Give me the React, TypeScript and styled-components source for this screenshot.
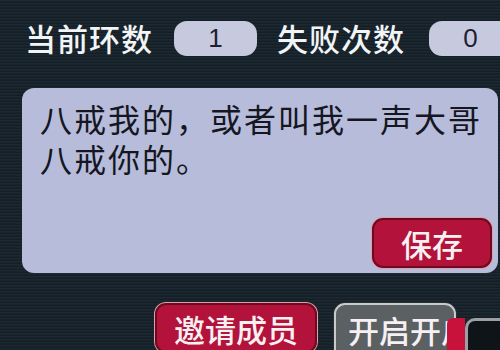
import React from "react";
import styled, { createGlobalStyle } from "styled-components";

const GlobalStyle = createGlobalStyle`
  html, body {
    margin: 0;
    padding: 0;
  }
  body {
    width: 500px;
    height: 350px;
    overflow: hidden;
    font-family: "Noto Sans CJK SC", "Noto Sans", sans-serif;
  }
`;

const Screen = styled.div`
  position: relative;
  width: 500px;
  height: 350px;
  overflow: hidden;
  background-color: #15212a;
  background-image: repeating-linear-gradient(
    to bottom,
    rgba(255, 255, 255, 0.035) 0px,
    rgba(255, 255, 255, 0.035) 1px,
    rgba(0, 0, 0, 0.08) 2px,
    rgba(0, 0, 0, 0.08) 3px
  );
  display: flex;
  flex-direction: column;
  padding: 19px 0 0 22px;
  box-sizing: border-box;
`;

const StatRow = styled.div`
  display: flex;
  align-items: center;
  height: 38px;
  flex-shrink: 0;
`;

const StatLabel = styled.span`
  color: #f2f4f6;
  font-size: 31px;
  font-weight: 500;
  letter-spacing: 1px;
  line-height: 38px;
  margin-left: 3px;
  white-space: nowrap;
  flex-shrink: 0;
`;

const StatPill = styled.div`
  flex-shrink: 0;
  width: 83px;
  height: 35px;
  margin-left: 21px;
  margin-right: 17px;
  border-radius: 13px;
  background: #c7cadf;
  color: #1d1f33;
  font-family: "Liberation Sans", Arial, sans-serif;
  font-size: 26px;
  display: flex;
  align-items: center;
  justify-content: center;

  &:last-child {
    margin-left: 24px;
  }
`;

const MessageBox = styled.div`
  flex-shrink: 0;
  margin-top: 31px;
  width: 476px;
  height: 185px;
  box-sizing: border-box;
  border-radius: 12px;
  background: #b6bcd9;
  padding: 10px 6px 0 18px;
  display: flex;
  flex-direction: column;
  justify-content: space-between;
`;

const MessageText = styled.p`
  margin: 0;
  color: #15161f;
  font-size: 32px;
  line-height: 40px;
  letter-spacing: 2px;
  white-space: nowrap;
`;

const ActionRow = styled.div`
  display: flex;
  justify-content: flex-end;
  padding-bottom: 5px;
`;

const Button = styled.button<{ $tone: "red" | "grey"; $w: number }>`
  flex-shrink: 0;
  width: ${(p) => p.$w}px;
  height: 50px;
  box-sizing: border-box;
  border-radius: 11px;
  border: 2px solid ${(p) => (p.$tone === "red" ? "#6e0a20" : "#c8cbcc")};
  box-shadow: 0 0 0 1px ${(p) => (p.$tone === "red" ? "#d9a0b0" : "#2a2f33")};
  background: ${(p) => (p.$tone === "red" ? "#b3123a" : "#5b6062")};
  color: #f6f0f2;
  font-family: "Noto Sans CJK SC", sans-serif;
  font-size: 31px;
  font-weight: 500;
  padding: 0;
  display: flex;
  align-items: center;
  justify-content: center;
  white-space: nowrap;
  overflow: hidden;
`;

const BottomRow = styled.div`
  flex-shrink: 0;
  display: flex;
  gap: 17px;
  margin-top: 30px;
  margin-left: 133px;
`;

const GreyButton = styled(Button)`
  justify-content: flex-start;
  padding-left: 12px;
  padding-bottom: 8px;
  border-radius: 11px 11px 0 0;
  height: 60px;
`;

const CornerOverlay = styled.div`
  position: absolute;
  left: 447px;
  top: 318px;
  width: 60px;
  height: 40px;
  display: flex;
`;

const RedTab = styled.div`
  width: 18px;
  height: 100%;
  background: #c8123c;
  border-radius: 6px 0 0 0;
`;

const DarkFrame = styled.div`
  flex: 1;
  border: 3px solid #9aa0a4;
  border-right: none;
  border-bottom: none;
  border-radius: 10px 0 0 0;
  background: #0e1418;
`;

export default function App() {
  return (
    <>
      <GlobalStyle />
      <Screen>
        <StatRow>
          <StatLabel>当前环数</StatLabel>
          <StatPill>1</StatPill>
          <StatLabel>失败次数</StatLabel>
          <StatPill>0</StatPill>
        </StatRow>
        <MessageBox>
          <MessageText>
            八戒我的，或者叫我一声大哥
            <br />
            八戒你的。
          </MessageText>
          <ActionRow>
            <Button $tone="red" $w={120}>保存</Button>
          </ActionRow>
        </MessageBox>
        <BottomRow>
          <Button $tone="red" $w={162}>邀请成员</Button>
          <GreyButton $tone="grey" $w={122}>开启开启</GreyButton>
        </BottomRow>
        <CornerOverlay>
          <RedTab />
          <DarkFrame />
        </CornerOverlay>
      </Screen>
    </>
  );
}
